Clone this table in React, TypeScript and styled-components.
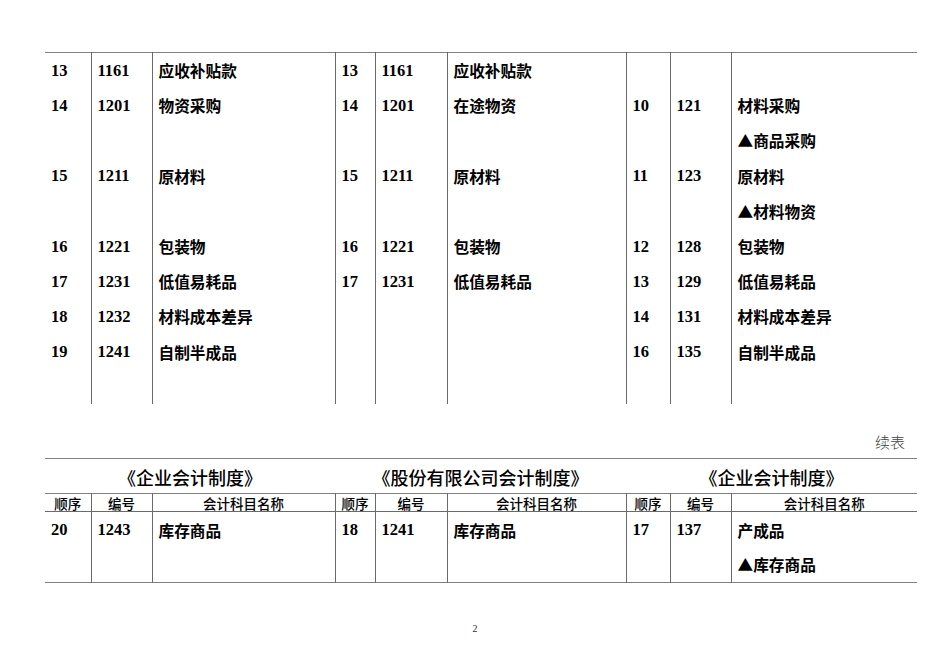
import React from 'react';
import styled, {createGlobalStyle} from "styled-components";

type Cell = [string, string, string]
type Row = [Cell, Cell, Cell]

const E: Cell = ["", "", ""]

const mainRows: Row[] = [
    [["13", "1161", "应收补贴款"], ["13", "1161", "应收补贴款"], E],
    [["14", "1201", "物资采购"], ["14", "1201", "在途物资"], ["10", "121", "材料采购"]],
    [E, E, ["", "", "▲商品采购"]],
    [["15", "1211", "原材料"], ["15", "1211", "原材料"], ["11", "123", "原材料"]],
    [E, E, ["", "", "▲材料物资"]],
    [["16", "1221", "包装物"], ["16", "1221", "包装物"], ["12", "128", "包装物"]],
    [["17", "1231", "低值易耗品"], ["17", "1231", "低值易耗品"], ["13", "129", "低值易耗品"]],
    [["18", "1232", "材料成本差异"], E, ["14", "131", "材料成本差异"]],
    [["19", "1241", "自制半成品"], E, ["16", "135", "自制半成品"]],
    [E, E, E],
]

const nextRows: Row[] = [
    [["20", "1243", "库存商品"], ["18", "1241", "库存商品"], ["17", "137", "产成品"]],
    [E, E, ["", "", "▲库存商品"]],
]

const widths = [46, 61, 183, 40, 72, 179, 44, 61, 186]
const systems = ["《企业会计制度》", "《股份有限公司会计制度》", "《企业会计制度》"]

const Rows: React.FC<{ rows: Row[] }> = ({rows}) => (
    <>
        {rows.map((row, i) =>
            <DataRow key={i}>
                {row.flatMap((cell, g) => cell.map((v, c) =>
                    <Td key={g * 3 + c} $first={g === 0 && c === 0} $name={c === 2}>{v}</Td>
                ))}
            </DataRow>
        )}
    </>
)

const App: React.FC = () => {
    return (
        <Page>
            <GlobalStyle/>
            <Sheet>
                <Colgroup/>
                <tbody>
                <Rows rows={mainRows}/>
                </tbody>
            </Sheet>
            <Continued>续表</Continued>
            <Sheet $closed>
                <Colgroup/>
                <tbody>
                <TitleRow>
                    {systems.map((s, i) => <Title key={i} colSpan={3}>{s}</Title>)}
                </TitleRow>
                <HeadRow>
                    {systems.flatMap((_, g) => ["顺序", "编号", "会计科目名称"].map((h, c) =>
                        <Th key={g * 3 + c} $first={g === 0 && c === 0}>{h}</Th>
                    ))}
                </HeadRow>
                <Rows rows={nextRows}/>
                </tbody>
            </Sheet>
            <PageNo>2</PageNo>
        </Page>
    )
}

const Colgroup = () => (
    <colgroup>
        {widths.map((w, i) => <col key={i} style={{width: w}}/>)}
    </colgroup>
)

const GlobalStyle = createGlobalStyle`
  body {
    margin: 0;
    background: #fff;
    color: #000;
    font-family: "Liberation Serif", "Noto Sans CJK SC", serif;
    -webkit-font-smoothing: antialiased;
  }
`
const Page = styled.div`
  width: 950px;
  height: 672px;
  padding: 52px 0 0 45px;
  box-sizing: border-box;
`
const Sheet = styled.table<{ $closed?: boolean }>`
  width: 872px;
  table-layout: fixed;
  border-collapse: collapse;
  border-top: 1px solid #808080;
  border-bottom: ${p => p.$closed ? "1px solid #808080" : "none"};
`
const DataRow = styled.tr`
  height: 35.2px;
`
const Td = styled.td<{ $first?: boolean; $name?: boolean }>`
  padding: 1px 6px 0 6px;
  vertical-align: middle;
  font-family: ${p => p.$name ? `"Noto Sans CJK SC", sans-serif` : `"Liberation Serif", serif`};
  font-size: ${p => p.$name ? "15.7px" : "16.5px"};
  font-weight: bold;
  white-space: nowrap;
  border-left: ${p => p.$first ? "none" : "1px solid #6a6a6a"};
`
const TitleRow = styled.tr`
  height: 35px;
`
const Title = styled.td`
  text-align: center;
  vertical-align: middle;
  padding: 2px 0 0 0;
  font-family: "Noto Sans CJK SC", sans-serif;
  font-size: 18px;
  font-weight: 500;
`
const HeadRow = styled.tr`
  height: 18px;
  border-top: 1px solid #808080;
  border-bottom: 1px solid #6a6a6a;
`
const Th = styled.td<{ $first?: boolean }>`
  padding: 0;
  text-align: center;
  vertical-align: middle;
  font-family: "Noto Sans CJK SC", sans-serif;
  font-size: 13.5px;
  font-weight: 500;
  line-height: 16px;
  border-left: ${p => p.$first ? "none" : "1px solid #6a6a6a"};
`
const Continued = styled.div`
  width: 860px;
  margin-top: 27px;
  height: 27px;
  text-align: right;
  font-family: "Noto Sans CJK SC", sans-serif;
  font-size: 15px;
  font-weight: 300;
  color: #444;
`
const PageNo = styled.div`
  width: 860px;
  margin-top: 40px;
  text-align: center;
  font-size: 10px;
  color: #333;
`

export default App
